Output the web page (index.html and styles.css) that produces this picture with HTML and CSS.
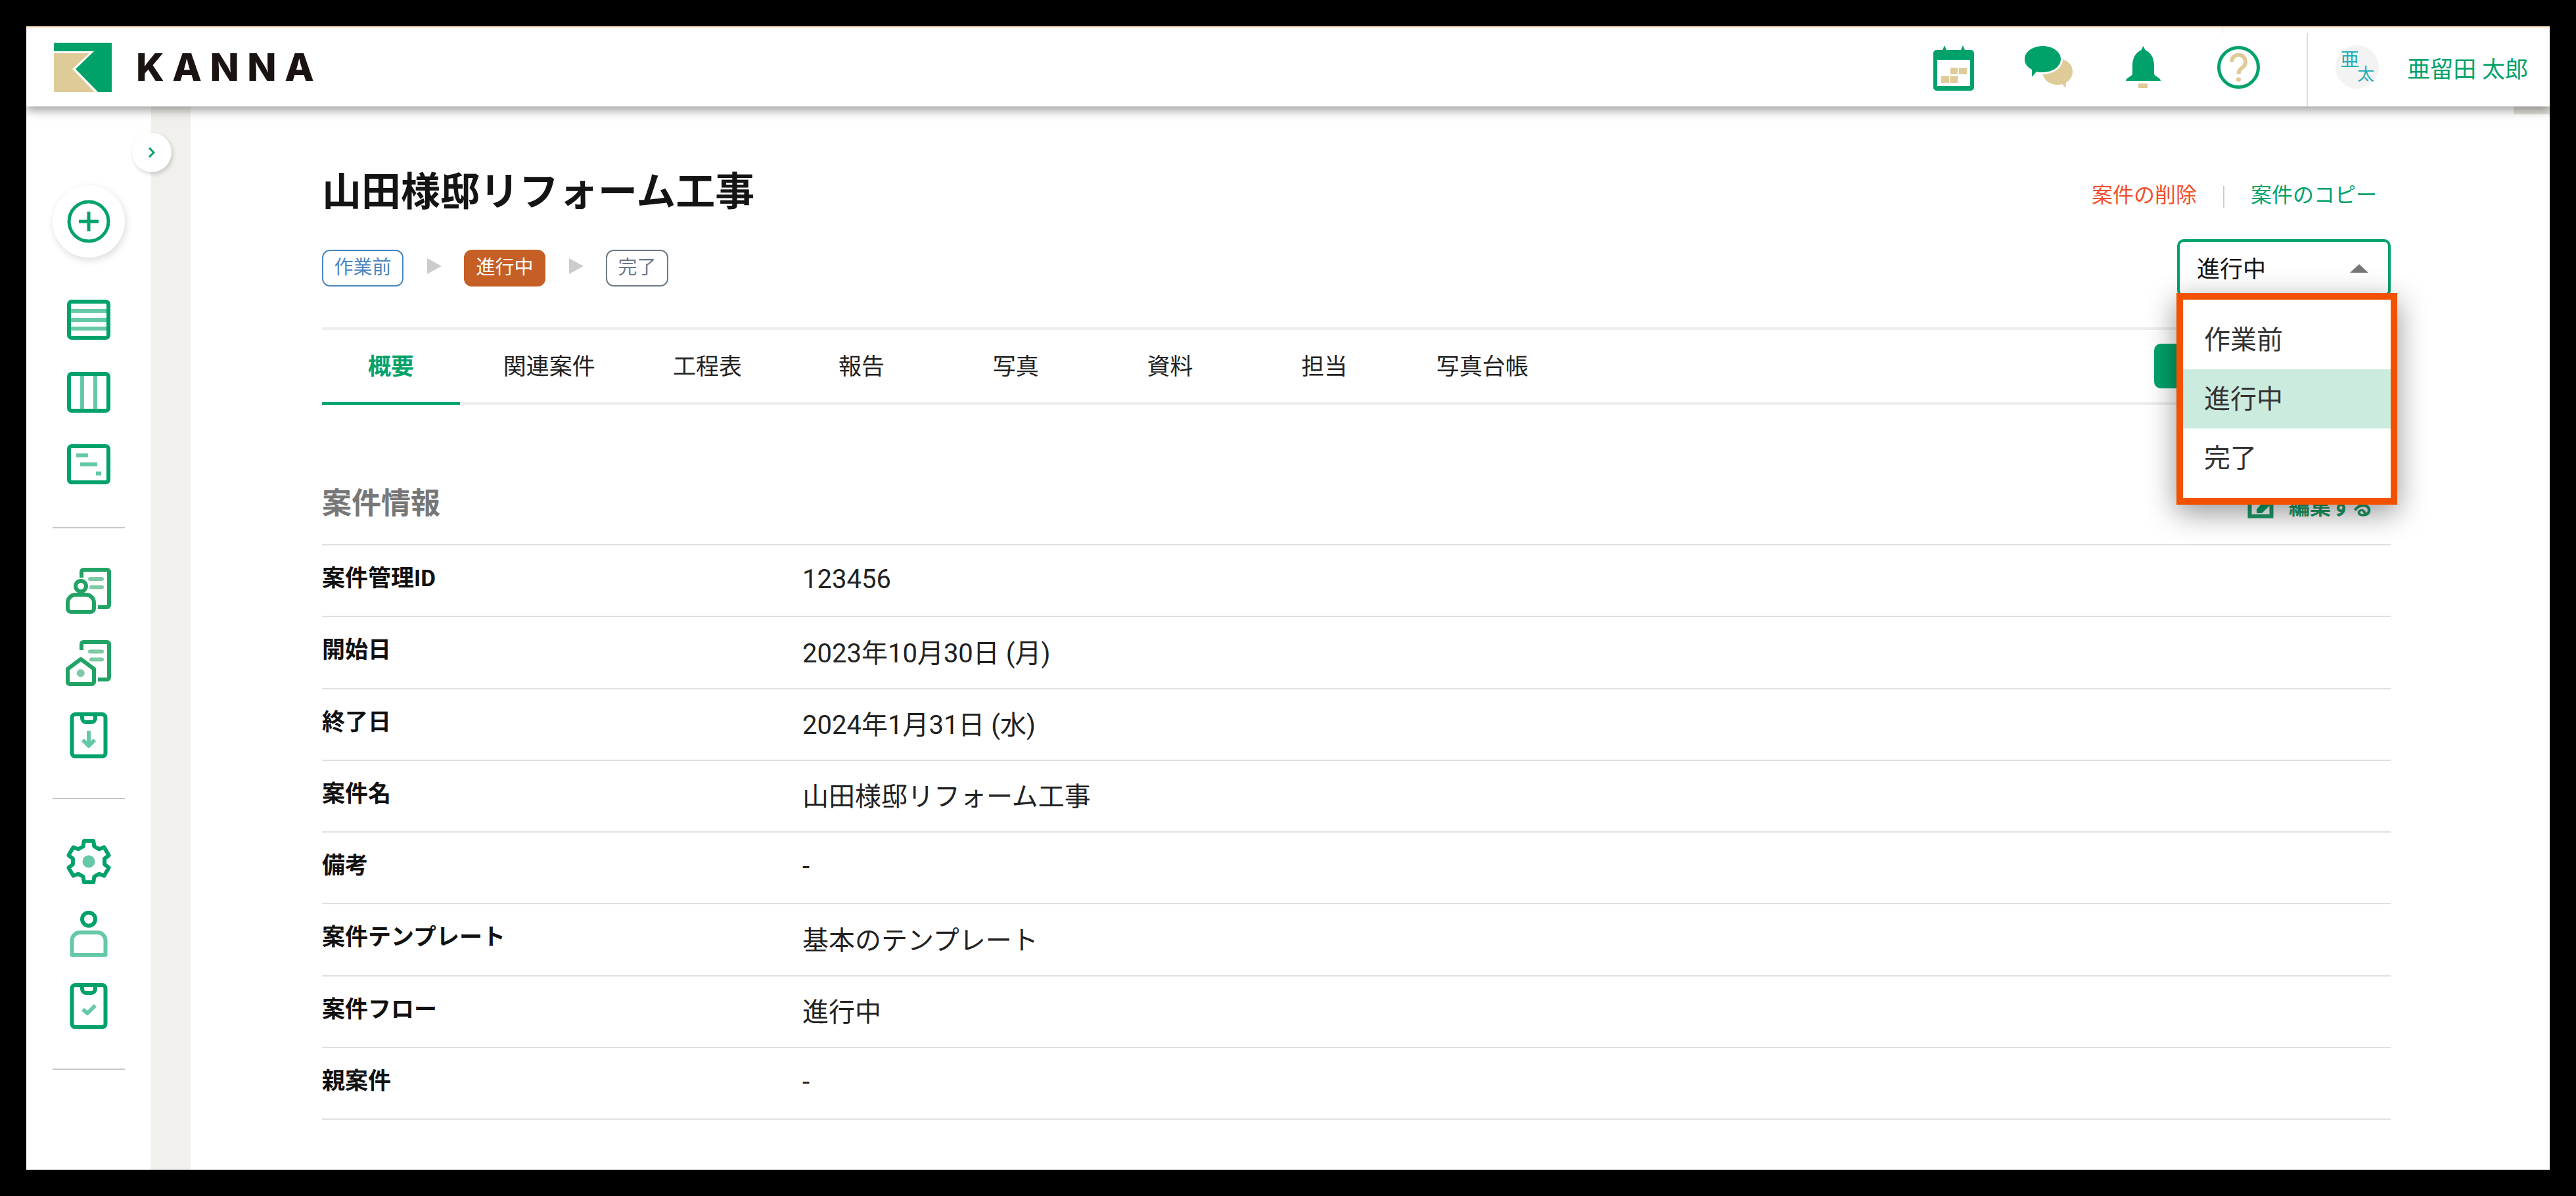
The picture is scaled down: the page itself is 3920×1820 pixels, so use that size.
FILE: index.html
```html
<!DOCTYPE html>
<html lang="ja">
<head>
<meta charset="utf-8">
<title>KANNA</title>
<link rel="stylesheet" href="styles.css">
</head>
<body>
<div class="app">
  <header class="topbar">
    <div class="brand">
      <svg class="brand-mark" viewBox="0 0 88 75">
        <path class="g" d="M0 0H88V75H67L33 40 61 13H0Z"/>
        <path class="t" d="M0 16H54L28 40 62 75H0Z"/>
      </svg>
      <span class="brand-name">KANNA</span>
    </div>
    <div class="top-actions">
      <span class="top-slot">
        <svg class="ic-cal" viewBox="0 0 62 69">
          <path class="g" d="M5 7H14L17 0 20 7H42L45 0 48 7H57A5 5 0 0 1 62 12V64A5 5 0 0 1 57 69H5A5 5 0 0 1 0 64V12A5 5 0 0 1 5 7Z"/>
          <rect class="w" x="6" y="22" width="50" height="40"/>
          <rect class="t" x="26" y="34" width="11" height="10"/><rect class="t" x="39" y="34" width="12" height="10"/>
          <rect class="t" x="12" y="47" width="12" height="10"/><rect class="t" x="25.5" y="47" width="12" height="10"/>
        </svg>
      </span>
      <span class="top-slot">
        <svg class="ic-chat" viewBox="0 0 73 64">
          <ellipse class="t" cx="50" cy="39" rx="23" ry="20"/>
          <path class="t" d="M54 54L62 64 64 50Z"/>
          <path class="g wline" d="M27.5 0C43 0 55 9 55 20S43 40 27.5 40C24 40 21 40 18 39L11 47 11 36C4 32 0 27 0 20 0 9 12 0 27.5 0Z"/>
        </svg>
      </span>
      <span class="top-slot">
        <svg class="ic-bell" viewBox="0 0 53 64">
          <path class="g" d="M26.5 0L29.5 6C38 10 43 18 43 30V42C43 46 53 48 53 53H0C0 48 10 46 10 42V30C10 18 15 10 23.5 6Z"/>
          <rect class="t" x="19" y="57" width="14" height="7"/>
        </svg>
      </span>
      <span class="top-slot">
        <svg class="ic-help" viewBox="0 0 65 65">
          <circle class="ring" cx="32.5" cy="32.5" r="30"/>
          <path class="qmark" d="M22 24A10.500 10.500 0 1 1 38 33C34 35.500 32.500 38 32.500 43"/>
          <circle class="t" cx="32.500" cy="51" r="3.500"/>
        </svg>
      </span>
    </div>
    <div class="user">
      <span class="avatar"><span class="av-a">亜</span><span class="av-b">太</span></span>
      <span class="user-name">亜留田 太郎</span>
    </div>
  </header>

  <div class="body">
    <aside class="sidebar">
      <div class="add">
        <svg viewBox="0 0 70 70"><circle class="dk" cx="35" cy="35" r="30"/><path class="dk" d="M20 35H50M35 20V50"/></svg>
      </div>
      <nav class="nav-group">
        <span class="nav-item"><svg viewBox="0 0 70 70"><path class="lt" d="M8 21H62M8 35H62M8 48H62"/><rect class="dk" x="5" y="7" width="60" height="55" rx="4"/></svg></span>
        <span class="nav-item"><svg viewBox="0 0 70 70"><path class="lt" d="M25 7V63M45 7V63"/><rect class="dk" x="5" y="7" width="60" height="56" rx="4"/></svg></span>
        <span class="nav-item"><svg viewBox="0 0 70 70"><rect class="dk" x="5" y="7" width="60" height="55" rx="4"/><path class="lt" d="M16 21H34M22 34.500H48M46 48.500H54"/></svg></span>
      </nav>
      <hr class="nav-rule">
      <nav class="nav-group">
        <span class="nav-item"><svg class="alt" viewBox="0 0 70 70"><path class="dk" d="M24 15V6A3 3 0 0 1 27 3H63A3 3 0 0 1 66 6V57A3 3 0 0 1 63 60H49"/><path class="lt rnd" d="M37 17H55M39 29.500H55"/><circle class="dk" cx="23" cy="28" r="8"/><path class="dk" d="M3 53A12 12 0 0 1 15 41H31A12 12 0 0 1 43 53V62A5 5 0 0 1 38 67H8A5 5 0 0 1 3 62Z"/></svg></span>
        <span class="nav-item"><svg class="alt" viewBox="0 0 70 70"><path class="dk" d="M24 15V6A3 3 0 0 1 27 3H63A3 3 0 0 1 66 6V57A3 3 0 0 1 63 60H49"/><path class="lt rnd" d="M37 17.500H55M39 29.500H55"/><path class="dk" d="M3 44L23 29 43 44V64A3 3 0 0 1 40 67H6A3 3 0 0 1 3 64Z"/><circle class="lf" cx="22.700" cy="50.300" r="6"/></svg></span>
        <span class="nav-item"><svg viewBox="0 0 70 70"><rect class="dk" x="9.500" y="3" width="51" height="64" rx="5"/><path class="dk" d="M25 3V9A6 6 0 0 0 31 15H39A6 6 0 0 0 45 9V3"/><path class="lt" d="M35 28V52M26 42L35 51 44 42"/></svg></span>
      </nav>
      <hr class="nav-rule">
      <nav class="nav-group">
        <span class="nav-item"><svg viewBox="0 0 70 70"><path class="dk" d="M26.600 12L27.800 3.800H42.200L43.400 12 50.800 16.200 58.400 13.200 65.600 25.600 59.100 30.700V39.300L65.600 44.400 58.400 56.800 50.800 53.800 43.400 58 42.200 66.200H27.800L26.600 58 19.200 53.800 11.600 56.800 4.400 44.400 10.900 39.300V30.700L4.400 25.600 11.600 13.200 19.200 16.200Z"/><circle class="lf" cx="35" cy="35" r="9.500"/></svg></span>
        <span class="nav-item"><svg viewBox="0 0 70 70"><circle class="dk" cx="35" cy="12.700" r="10"/><path class="lt" d="M9.500 67V45A12 12 0 0 1 21.500 33H48.500A12 12 0 0 1 60.500 45V67Z"/></svg></span>
        <span class="nav-item"><svg viewBox="0 0 70 70"><rect class="dk" x="9.500" y="3" width="51" height="64" rx="5"/><path class="dk" d="M25 3V9A6 6 0 0 0 31 15H39A6 6 0 0 0 45 9V3"/><path class="lt" d="M26 40L33 46 45 34"/></svg></span>
      </nav>
      <hr class="nav-rule">
    </aside>
    <div class="gutter"></div>
    <span class="toggle"><svg viewBox="0 0 14 20"><path d="M3 3L10 10 3 17"/></svg></span>

    <main class="main">
      <div class="title-row">
        <h1 class="title">山田様邸リフォーム工事</h1>
        <div class="links"><a class="link-del">案件の削除</a><i class="link-sep"></i><a class="link-copy">案件のコピー</a></div>
      </div>
      <div class="status-row">
        <div class="flow">
          <span class="badge b-pre">作業前</span><i class="arrow"></i>
          <span class="badge b-now">進行中</span><i class="arrow"></i>
          <span class="badge b-done">完了</span>
        </div>
        <div class="select">
          <span class="select-value">進行中</span><i class="caret"></i>
          <ul class="menu">
            <li>作業前</li>
            <li class="on">進行中</li>
            <li>完了</li>
          </ul>
        </div>
      </div>
      <div class="tabs">
        <a class="tab active">概要</a>
        <a class="tab">関連案件</a>
        <a class="tab">工程表</a>
        <a class="tab">報告</a>
        <a class="tab">写真</a>
        <a class="tab">資料</a>
        <a class="tab">担当</a>
        <a class="tab">写真台帳</a>
        <span class="tab-btn"></span>
      </div>
      <div class="section-row">
        <h2 class="section-title">案件情報</h2>
        <a class="edit">
          <svg viewBox="0 0 40 40"><path class="edit-box" d="M24 4H3.500V36.500H36.500V17"/><path class="g" d="M14 32V26L30 8 38 16 22 32Z"/></svg>
          編集する
        </a>
      </div>
      <dl class="info">
        <div class="row"><dt>案件管理ID</dt><dd>123456</dd></div>
        <div class="row"><dt>開始日</dt><dd>2023年10月30日 (月)</dd></div>
        <div class="row"><dt>終了日</dt><dd>2024年1月31日 (水)</dd></div>
        <div class="row"><dt>案件名</dt><dd>山田様邸リフォーム工事</dd></div>
        <div class="row"><dt>備考</dt><dd>-</dd></div>
        <div class="row"><dt>案件テンプレート</dt><dd>基本のテンプレート</dd></div>
        <div class="row"><dt>案件フロー</dt><dd>進行中</dd></div>
        <div class="row"><dt>親案件</dt><dd>-</dd></div>
      </dl>
    </main>
  </div>
</div>
</body>
</html>
```
FILE: styles.css
```css
* { box-sizing: border-box; }
html, body { margin: 0; height: 100%; }
body {
  background: #000;
  padding: 40px;
  font-family: Roboto, "Noto Sans CJK JP", sans-serif;
  color: #222;
  overflow: hidden;
}
.app { width: 3840px; height: 1740px; background: #fff; display: flex; flex-direction: column; overflow: hidden; }
.g { fill: #00a26a; }
.t { fill: #dfcb97; }
.w { fill: #fff; }

.topbar {
  position: relative;
  z-index: 3;
  flex: none;
  height: 122px;
  display: flex;
  align-items: stretch;
  background: #fff;
  border-top: 2px solid #fcdfb8;
  box-shadow: 0 6px 14px rgba(0, 0, 0, .38);
}
.topbar::after {
  content: "";
  position: absolute;
  left: 3341px;
  top: 0;
  width: 1px;
  height: 8px;
  background: #ddd;
}
.brand { display: flex; align-items: center; padding-left: 42px; }
.brand-mark { width: 88px; height: 75px; display: block; }
.brand-name {
  margin-left: 37px;
  font-family: Inter, sans-serif;
  font-weight: 800;
  font-size: 58px;
  line-height: 1;
  letter-spacing: 12.5px;
  color: #1a1311;
}
.top-actions { margin-left: auto; display: flex; align-items: center; }
.top-slot { width: 144px; display: flex; justify-content: center; align-items: center; }
.top-slot svg { display: block; }
.ic-cal { width: 62px; height: 69px; margin-top: 2px; }
.ic-chat { width: 73px; height: 64px; overflow: visible; }
.ic-bell { width: 53px; height: 64px; }
.ic-help { width: 65px; height: 65px; margin-left: 3px; }
.wline { stroke: #fff; stroke-width: 6px; paint-order: stroke; }
.ring { fill: none; stroke: #00a26a; stroke-width: 5px; }
.qmark { fill: none; stroke: #dfcb97; stroke-width: 6px; }
.user {
  margin-left: 33px;
  padding: 0 33px 0 42px;
  border-left: 2px solid #ddd;
  margin-top: 8px;
  display: flex;
  align-items: center;
}
.avatar {
  position: relative;
  display: block;
  width: 66px;
  height: 66px;
  margin-top: -8px;
  border-radius: 50%;
  background: #f3f3f3;
  color: #22afb5;
}
.av-a { position: absolute; left: 7px; top: 8px; font-size: 29px; line-height: 29px; }
.av-b { position: absolute; left: 33px; top: 31px; font-size: 26px; line-height: 26px; }
.user-name { margin-left: 43px; margin-top: -8px; font-size: 35px; color: #00a26a; white-space: nowrap; }

.body { position: relative; flex: 1; display: flex; min-height: 0; }
.sidebar { flex: none; width: 190px; padding: 120px 40px 0; background: #fff; }
.gutter { flex: none; width: 60px; background: #f1f0ec; }
.gutter::after {
  content: "";
  position: absolute;
  right: 0;
  top: 0;
  width: 55px;
  height: 12px;
  background: #e4e1dc;
  z-index: 1;
}
.add {
  width: 110px;
  height: 110px;
  border-radius: 50%;
  background: #fff;
  box-shadow: 2px 4px 12px rgba(0, 0, 0, .14);
  display: flex;
  align-items: center;
  justify-content: center;
  margin-bottom: 40px;
}
.add svg { width: 70px; height: 70px; }
.nav-group { display: flex; flex-direction: column; }
.nav-item { height: 110px; display: flex; align-items: center; justify-content: center; }
.nav-item svg { width: 70px; height: 70px; display: block; flex: none; }
.dk, .lt { fill: none; stroke-width: 6px; stroke-linejoin: round; }
.dk { stroke: #00a26a; }
.add .dk { stroke-width: 5px; }
.lt { stroke: #66c9a6; }
.lf { fill: #66c9a6; }
.rnd { stroke-linecap: round; }
.alt .dk { stroke: #21a366; }
.alt .lt { stroke: #7fcaa6; }
.alt .lf { fill: #7fcaa6; }
.nav-rule { margin: 40px 0; height: 2px; border: 0; background: #c8c8c8; }
.toggle {
  position: absolute;
  left: 161px;
  top: 40px;
  width: 60px;
  height: 60px;
  border-radius: 50%;
  background: #fff;
  box-shadow: 2px 3px 6px rgba(0, 0, 0, .18);
  display: flex;
  align-items: center;
  justify-content: center;
  z-index: 2;
}
.toggle svg { width: 14px; height: 20px; fill: none; stroke: #00a26a; stroke-width: 3px; }

.main { flex: 1; min-width: 0; padding: 100px 242px 0 200px; background: #fff; }
.title-row { height: 62px; display: flex; justify-content: space-between; align-items: center; }
.title { margin: 0; font-size: 60px; line-height: 60px; font-weight: 700; color: #141414; white-space: nowrap; }
.links { display: flex; align-items: center; font-size: 32px; line-height: 40px; padding-right: 21px; margin-top: 8px; }
.link-del { color: #f2502a; }
.link-copy { color: #00a26a; }
.link-sep { width: 2px; height: 33px; margin: 4px 40px 0; background: #ccc; }
.status-row { margin-top: 40px; height: 88px; display: flex; justify-content: space-between; align-items: center; }
.flow { display: flex; align-items: center; }
.badge {
  height: 56px;
  padding: 0 16.5px;
  border: 2px solid;
  border-radius: 12px;
  font-size: 29px;
  line-height: 50px;
  white-space: nowrap;
}
.b-pre { border-color: #4a86bf; color: #4a86bf; }
.b-now { border-color: #c65f25; background: #c65f25; color: #fff; }
.b-done { border-color: #6c7a89; color: #6c7a89; }
.arrow {
  width: 0;
  height: 0;
  margin: -6px 34px 0 36px;
  border-style: solid;
  border-width: 12px 0 12px 22px;
  border-color: transparent transparent transparent #ccc;
}
.select {
  position: relative;
  z-index: 2;
  width: 325px;
  height: 88px;
  padding: 0 30px 0 26px;
  border: 4px solid #00a26a;
  border-radius: 10px;
  display: flex;
  align-items: center;
  justify-content: space-between;
  background: #fff;
  font-size: 35px;
  color: #111;
}
.select-value { margin-top: -4px; }
.caret {
  width: 0;
  height: 0;
  border-style: solid;
  border-width: 0 14px 13px;
  border-color: transparent transparent #777;
}
.menu {
  position: absolute;
  left: -5px;
  top: 78px;
  width: 336px;
  margin: 0;
  padding: 16px 0;
  list-style: none;
  background: #fff;
  border: 10px solid #f25200;
  box-shadow: 0 12px 42px rgba(0, 0, 0, .42);
  font-size: 40px;
  color: #333;
}
.menu li { height: 90px; padding-left: 32px; line-height: 92px; }
.menu .on { background: #cbebdf; }
.tabs {
  margin-top: 46px;
  height: 118px;
  display: flex;
  align-items: center;
  gap: 24.7px;
  border-top: 4px solid #eee;
  border-bottom: 4px solid #eee;
}
.tab {
  align-self: stretch;
  min-width: 210px;
  margin-bottom: -4px;
  padding: 0 41px 6px;
  display: flex;
  align-items: center;
  justify-content: center;
  border-bottom: 4px solid transparent;
  font-size: 35px;
  color: #222;
  white-space: nowrap;
}
.tab.active { border-bottom-color: #00a26a; color: #00a26a; font-weight: 700; }
.tab-btn { margin-left: auto; width: 360px; height: 68px; border-radius: 10px; background: #00a26a; }
.section-row { height: 212px; padding: 120px 27px 32px 0; display: flex; justify-content: space-between; align-items: center; }
.section-title { margin: 2px 0 0; font-size: 45px; line-height: 60px; font-weight: 700; color: #777; }
.edit { display: flex; align-items: center; gap: 23px; margin-top: 6px; font-size: 32px; font-weight: 700; color: #1f9c6a; }
.edit svg { width: 40px; height: 40px; }
.edit-box { fill: none; stroke: #1f9c6a; stroke-width: 6px; }
.info { margin: 0; border-top: 2px solid #e0e0e0; }
.row { height: 109.250px; display: flex; align-items: center; border-bottom: 2px solid #e0e0e0; }
.row dt { width: 731px; flex: none; font-size: 35px; font-weight: 700; color: #111; margin-top: -14px; }
.row dd { margin: -4px 0 0; font-size: 40px; color: #222; }
```
